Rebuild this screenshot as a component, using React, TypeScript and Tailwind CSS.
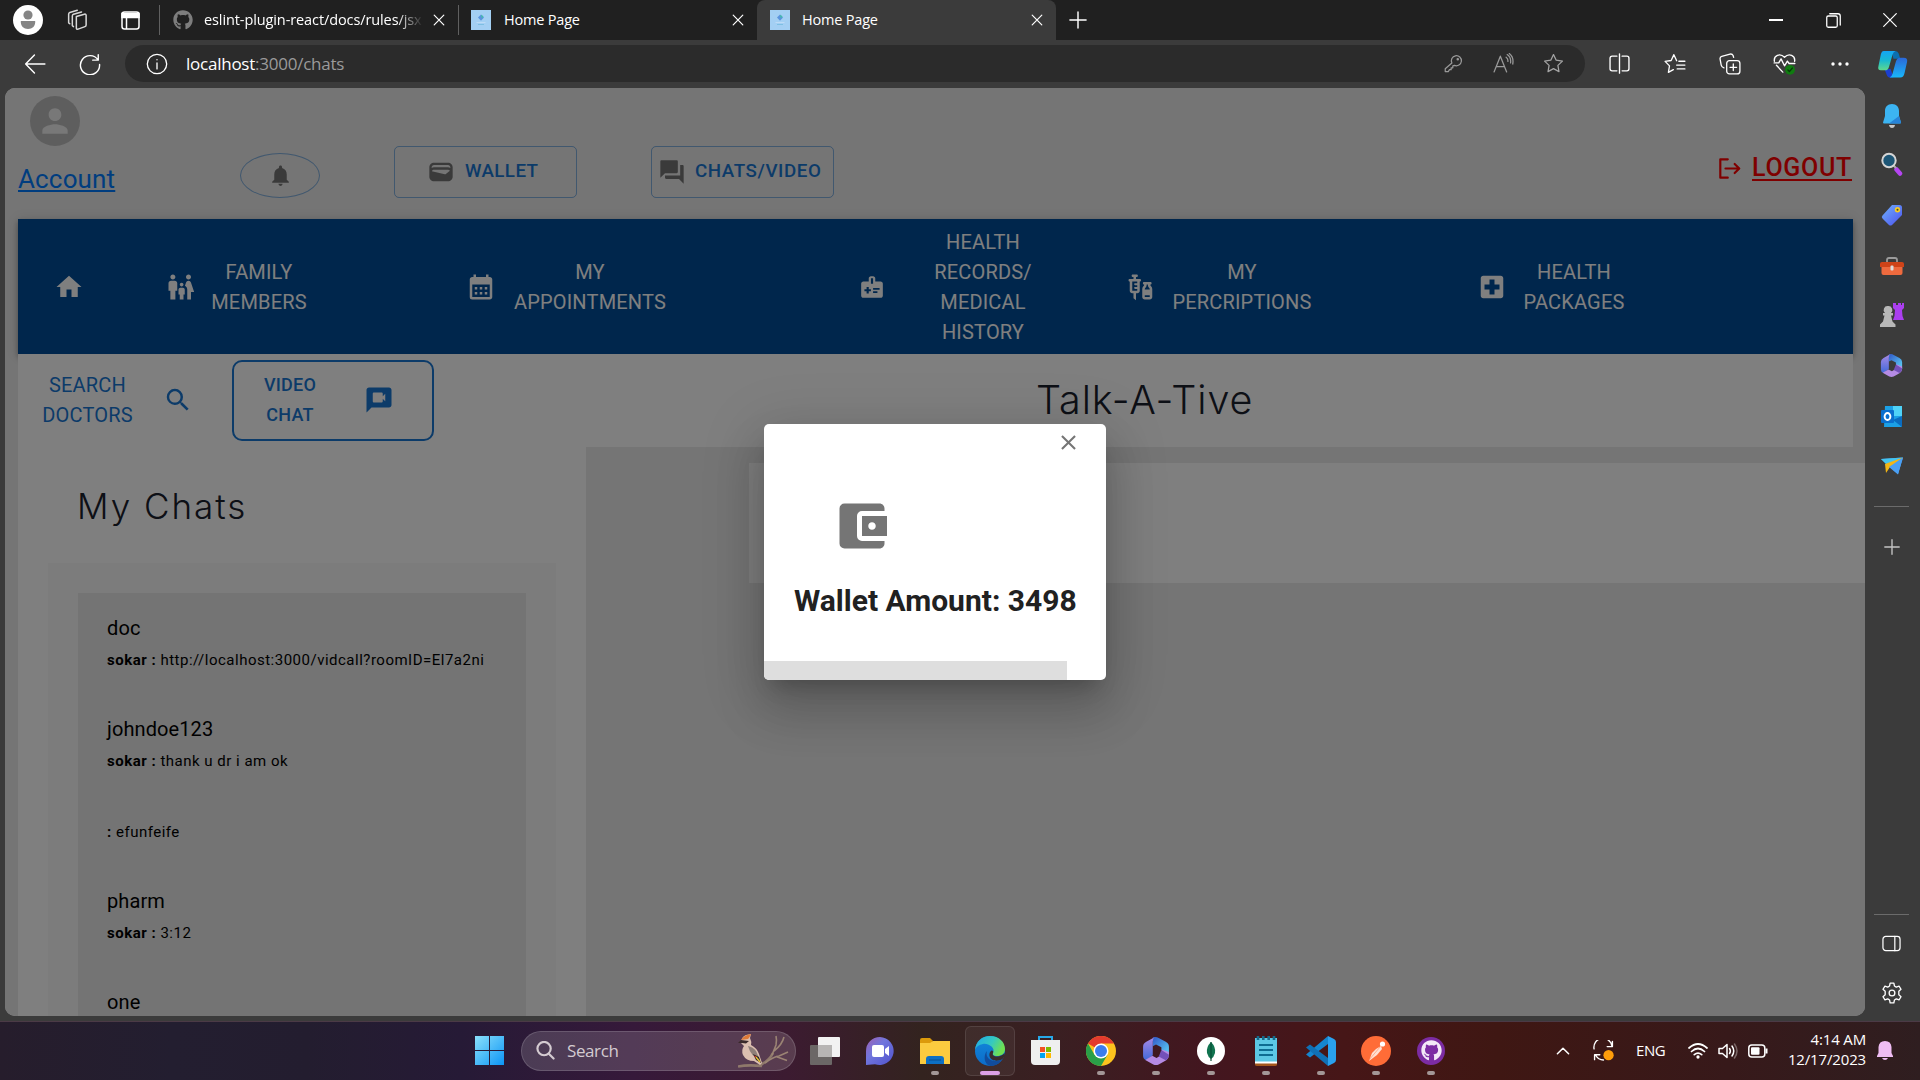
import React from 'react';
import {
  MdPerson, MdNotifications, MdWallet, MdQuestionAnswer, MdHome, MdFamilyRestroom, MdCalendarMonth,
  MdMedicalInformation, MdVaccines, MdLocalHospital, MdSearch, MdVideoChat, MdClose, MdAccountBalanceWallet,
} from 'react-icons/md';
import { FaGithub } from 'react-icons/fa';

type P = { children?: React.ReactNode; className?: string };

/* Thin-stroke 20-unit drawing used for the browser chrome */
const Line = ({ s = 20, w = 1.4, children, className = '' }: P & { s?: number; w?: number }) => (
  <svg width={s} height={s} viewBox="0 0 20 20" fill="none" stroke="currentColor" strokeWidth={w}
    strokeLinecap="round" strokeLinejoin="round" className={'shrink-0 ' + className}>{children}</svg>
);
const Cross = () => <Line s={12} w={2}><path d="M2 2l16 16M18 2L2 18" /></Line>;
const Star = <path d="M10 1.5l2.6 5.4 5.9.8-4.3 4.1 1 5.9L10 14.900l-5.200 2.800 1-5.900L1.500 7.700l5.900-.8z" />;

const Favicon = () => (
  <svg width="20" height="20" viewBox="0 0 20 20" className="shrink-0">
    <rect width="20" height="20" fill="#a3cff3" />
    <path d="M10 4.500l3 3-3 3.200-3-3.200z" fill="#5a94de" />
    <path d="M10 4.800l2.500 1.400-1.600 2.200z" fill="#41bfa6" />
    <path d="M5.500 12.500h9" stroke="#bfdcf5" strokeWidth=".9" />
    <path d="M7 14.500h6" stroke="#79bde0" strokeWidth=".9" />
  </svg>
);

const Slot = ({ children, className = '' }: P) => (
  <div className={'flex shrink-0 items-center justify-center ' + className}>{children}</div>
);

const TitleBar = () => (
  <div className="flex h-10 shrink-0 items-center bg-[#202020] text-[14.5px] tracking-[-0.2px] text-white">
    <Slot className="ml-[13px] h-[30px] w-[30px] rounded-full bg-white">
      <svg width="16" height="20" viewBox="0 0 16 20" fill="#858585"><circle cx="8" cy="5" r="4.600" /><path d="M.8 11h14.400c.5 5-3 8-7.200 8S.3 16 .8 11z" /></svg>
    </Slot>
    <Slot className="w-[69px] text-[#d8d8d8]">
      <Line s={23} w={1.300}>
        <path d="M9 6.500l7-2q1.500-.3 1.500 1v8.500q0 1-1 1.300l-6 2.200q-1.500.4-1.500-1z" />
        <path d="M5.500 14.500V6q0-1 1-1.400l7-2M2.300 12V4.500q0-1 1-1.400l6.500-2M5.500 14.500l1 .8M2.300 12l1 .8" />
      </Line>
    </Slot>
    <Slot className="w-[36px]">
      <svg width="19" height="19" viewBox="0 0 19 19" fill="none" stroke="white" strokeWidth="1.500"><rect x="1" y="1" width="17" height="17" rx="2.500" /><path d="M1 2.500h17v4H1z" fill="white" /><path d="M5.500 6v12" /></svg>
    </Slot>
    <div className="ml-[11px] h-[30px] w-px bg-[#606060]" />
    <FaGithub size={20} className="ml-[13px] text-[#7d7d7d]" />
    <div className="ml-[11px] w-[219px] overflow-hidden tracking-[-0.100px] whitespace-nowrap [mask-image:linear-gradient(to_right,black_88%,transparent)]">eslint-plugin-react/docs/rules/jsx</div>
    <Slot className="ml-[8px] w-4"><Cross /></Slot>
    <div className="ml-[11px] h-[30px] w-px bg-[#606060]" />
    <div className="ml-[12px] flex w-[286px] items-center">
      <Favicon /><div className="ml-[13px] flex-1">Home Page</div>
      <Slot className="mr-[11px] w-4"><Cross /></Slot>
    </div>
    <div className="relative flex h-10 w-[299px] items-center rounded-t-lg bg-[#3b3b3b]">
      <div className="ml-[13px]"><Favicon /></div><div className="ml-[12px] flex-1">Home Page</div>
      <Slot className="mr-[11px] w-4"><Cross /></Slot>
    </div>
    <Slot className="ml-[12px] w-5"><Line s={18} w={1.600}><path d="M10 1v18M1 10h18" /></Line></Slot>
    <div className="flex-1" />
    <div className="h-[1.500px] w-[14px] bg-white" />
    <Slot className="ml-[43px] w-[14px]"><Line s={15} w={1.700}><rect x="1" y="4" width="14" height="15" rx="2" /><path d="M5 1h11q3 0 3 3v12" /></Line></Slot>
    <Slot className="mr-[23px] ml-[43px] w-[14px]"><Line s={14} w={1.700}><path d="M1 1l18 18M19 1L1 19" /></Line></Slot>
  </div>
);

const Toolbar = () => (
  <div className="flex h-12 shrink-0 items-center bg-[#3b3b3b] pb-px text-white">
    <Slot className="ml-[24px] w-[22px]"><Line s={22} w={1.300}><path d="M19 10H1.500M9.500 1.800L1.500 10l8 8.200" /></Line></Slot>
    <Slot className="ml-[33px] w-[22px]"><Line s={22} w={1.300}><path d="M17.500 1.500v5h-5M17.300 6.300A8.700 8.700 0 1 0 18.700 10.500" /></Line></Slot>
    <div className="ml-[24px] flex h-[37px] w-[1460px] items-center rounded-full bg-[#2b2b2b]">
      <Slot className="ml-[20px] w-[23px]"><Line s={22} w={1.200}><circle cx="10" cy="10" r="8.800" /><path d="M10 9v5.500M10 6v.2" /></Line></Slot>
      <div className="ml-[18px] flex-1 text-[17px] tracking-[-0.240px]">localhost<span className="text-[#9a9a9a]">:3000/chats</span></div>
      <Slot className="w-[50px] text-[#9a9a9a]"><Line s={19} w={1.300}><path d="M8.300 9.500A5.300 5.300 0 1 1 11 12l-1.700.5v2H7.500v2H5.800L4.500 18.500H1.300v-3z" /><circle cx="14.500" cy="5.500" r=".7" /></Line></Slot>
      <Slot className="w-[50px] text-[#9a9a9a]"><Line s={21} w={1.200}><path d="M1 18L7 3l6 15M3 13h8M12.500 4q2 1.500 1.700 4M13.500 1.500q4 2.500 3.200 8M15.500.5q4.500 3.500 3.300 10" /></Line></Slot>
      <Slot className="mr-[7px] w-[50px] text-[#a5a5a5]"><Line s={21} w={1.200}>{Star}</Line></Slot>
    </div>
    <Slot className="ml-[6px] w-[56px]"><Line s={21} w={1.300}><path d="M7.500 3H3q-2 0-2 2v10q0 2 2 2h4.500M12.500 3H17q2 0 2 2v10q0 2-2 2h-4.500M10 .8v18.400" /></Line></Slot>
    <Slot className="w-[55px]"><Line s={22} w={1.200}><path d="M11.500 7L9 1.500 6.500 6.800l-5.500.8 4 4.100-1 5.900 4.500-2.500M13.500 7.500H19M11.500 11H19M12 14.500h7" /></Line></Slot>
    <Slot className="w-[55px]"><Line s={22} w={1.200}><rect x="7" y="7" width="12" height="12" rx="2.500" /><path d="M13 10v6M10 13h6M4.500 13.500Q2.500 13 2 11L1 5.500q-.3-2 1.500-2.500l7.500-2q2-.4 2.800 1.300l.5 1.700" /></Line></Slot>
    <Slot className="w-[55px]">
      <Line s={23} w={1.200}><path d="M1.200 8C.5 3 6 .5 10 4.500 14 .5 19.500 3 18.800 8M3 11.500l5.500 6M1 9.500h4l2-3.500 3 6 2.500-4 1.500 2h5" /><circle cx="14.800" cy="15.500" r="4.300" fill="#107c10" stroke="none" /><path d="M13 15.700l1.300 1.300 2.500-3" stroke="#063d06" /></Line>
    </Slot>
    <Slot className="w-[55px]"><svg width="18" height="4" fill="white"><circle cx="2" cy="2" r="1.700" /><circle cx="9" cy="2" r="1.700" /><circle cx="16" cy="2" r="1.700" /></svg></Slot>
    <Slot className="ml-[8px] w-[34px]">
      <svg width="31" height="28" viewBox="0 0 32 28">
        <defs>
          <linearGradient id="cp1" x1="0" y1="0" x2="0" y2="1"><stop offset="0" stopColor="#14a5f5" /><stop offset=".5" stopColor="#19b9d0" /><stop offset="1" stopColor="#5fd98c" /></linearGradient>
          <linearGradient id="cp2" x1="0" y1="0" x2="0" y2="1"><stop offset="0" stopColor="#2b67d8" /><stop offset="1" stopColor="#19b8fb" /></linearGradient>
        </defs>
        <path d="M15 .5h4q2.500 0 3.500 3l1.500 5h-7z" fill="#0b6fb0" />
        <path d="M8 20l6-1 3 9h-3q-3 0-4-3z" fill="#1b3fd0" />
        <path d="M7 .5h12q-2 .5-3 4l-3.500 12q-1 4-4 4H4Q.3 20.500 1.500 16L4 4Q4.800.5 7 .5z" fill="url(#cp1)" />
        <path d="M24 7.500h3.500Q32 7.500 31 12l-2.500 11q-1 5-4.500 5H13q2.200-.5 3-4l3.500-12.500q1-4 4.500-4z" fill="url(#cp2)" />
      </svg>
    </Slot>
  </div>
);

const Hexa = ({ s }: { s: number }) => (
  <svg width={s} height={s} viewBox="0 0 26 26">
    <defs>
      <linearGradient id="hx" x1="0" y1="0" x2="1" y2="1"><stop offset="0" stopColor="#3158c8" /><stop offset="1" stopColor="#5ed6f8" /></linearGradient>
      <linearGradient id="hy" x1="0" y1="0" x2="0" y2="1"><stop offset="0" stopColor="#a98ae6" /><stop offset="1" stopColor="#4169d8" /></linearGradient>
    </defs>
    <path d="M10 .5q3-1 5.500.5L22 4.500q3 1.500 3 4.500v8l-7-5V9.500L13 7l-3 1.500z" fill="url(#hx)" />
    <path d="M12 0L4 4.500Q1 6 1 9v8.500q0 3 3 4l6-4.500V4q0-3 2-4z" fill="url(#hy)" />
    <path d="M25 14v3q0 3-2.500 4.500l-7 4q-2.500 1-5 0L3 21.300 9.500 17.500l4 2 5-3v-5z" fill="#b58be4" />
    <path d="M18 12l7 4.500q0 3.500-3 5L15.500 18z" fill="#7350b8" />
  </svg>
);

const SideBar = () => (
  <div className="flex w-[55px] shrink-0 flex-col items-center bg-[#3b3b3b] pr-[2px] text-white">
    <Slot className="mt-[3px] h-[49px]">
      <svg width="18" height="24" viewBox="0 0 18 24"><path d="M9 0C4.500 0 2 3 2 7v5L0 18.500q0 1 1 1h16q1 0 1-1L16 12V7c0-4-2.500-7-7-7z" fill="#3cb4f2" /><path d="M16 12l2 6.500q0 1-1 1H6z" fill="#2783d8" /><path d="M6 21h6q-.5 3-3 3t-3-3z" fill="#c8c8c8" /></svg>
    </Slot>
    <Slot className="h-[48px]">
      <svg width="22" height="24" viewBox="0 0 22 24"><path d="M15.500 17.500l3.500 4" stroke="#b545f2" strokeWidth="4.500" strokeLinecap="round" /><path d="M12 13l3 3" stroke="#aaa" strokeWidth="2" /><circle cx="8" cy="8.500" r="6.700" fill="#1d5676" stroke="#d5d5d5" strokeWidth="2" /></svg>
    </Slot>
    <Slot className="h-[53px]">
      <svg width="22" height="22" viewBox="0 0 22 22"><defs><linearGradient id="tg" x1="0" y1="0" x2="1" y2="1"><stop offset="0" stopColor="#6fb2fb" /><stop offset="1" stopColor="#4c50ef" /></linearGradient></defs><path d="M11 1h7.500Q21 1 21 3.500V11L11 21q-1.500 1-3 0L1.500 14.500q-1.500-1.500 0-3z" fill="url(#tg)" /><circle cx="16.500" cy="5.700" r="2.700" fill="#f6ca27" /><circle cx="16.500" cy="5.700" r="1" fill="#4b4c1c" /></svg>
    </Slot>
    <Slot className="h-[49px]">
      <svg width="24" height="18" viewBox="0 0 24 18"><path d="M7 5V3q0-2 2-2h6q2 0 2 2v2" fill="none" stroke="#9b9b9b" strokeWidth="1.800" /><path d="M1.500 9h21v7q0 2-2 2h-17q-2 0-2-2z" fill="#ee6a3e" /><path d="M2 5h20q2 0 2 2v3H0V7q0-2 2-2z" fill="#cf4318" /><rect x="10.500" y="8.500" width="3" height="5" rx="1" fill="#ddd" /></svg>
    </Slot>
    <Slot className="h-[50px]">
      <svg width="24" height="24" viewBox="0 0 24 24"><path d="M13 0h3v2h2V0h3v2h1V0h2v5l-2 2 .5 6 1.500 4H13l1.500-4L15 7l-2-2z" fill="#ab3ff0" /><path d="M8 3a4 4 0 0 1 3 7h2v2.500h-2l1.500 6 3 3V24H0v-2.500l3-3 1.500-6H3V10h2a4 4 0 0 1 3-7z" fill="#b8b8b8" /></svg>
    </Slot>
    <Slot className="h-[51px]"><Hexa s={23} /></Slot>
    <Slot className="h-[51px]">
      <svg width="21" height="21" viewBox="0 0 21 21"><path d="M4 0h17v20q0 1-1 1H3z" fill="#1ba0e6" /><path d="M12 0h9v10h-9z" fill="#4fd3f8" /><path d="M12 14l9-4v11z" fill="#0a6cc0" /><rect y="4" width="13" height="13" rx="1" fill="#0a6fce" /><ellipse cx="6.500" cy="10.500" rx="2.900" ry="3.500" fill="none" stroke="white" strokeWidth="1.900" /></svg>
    </Slot>
    <Slot className="h-[47px]">
      <svg width="22" height="18" viewBox="0 0 22 18"><path d="M0 2L22 .5 17 17l-6-5z" fill="#4aa5f5" /><path d="M0 2L22 .5 5 7z" fill="#43c4f0" /><path d="M22 .5L4 7l1 9 4-6z" fill="#f4b614" /><path d="M22 .5L8 10l9 7.500z" fill="#4a9ff4" /></svg>
    </Slot>
    <div className="mt-[17px] h-px w-[35px] bg-[#6b6b6b]" />
    <Slot className="mt-[31px] h-[17px] text-[#c5c5c5]"><Line s={16} w={1.700}><path d="M10 1v18M1 10h18" /></Line></Slot>
    <div className="mt-auto h-px w-[35px] bg-[#6b6b6b]" />
    <Slot className="mt-[18px] h-[20px]"><Line s={19} w={1.300}><rect x="1" y="2.500" width="18" height="15" rx="3" /><path d="M13.500 2.500v15" /></Line></Slot>
    <Slot className="mt-[28px] mb-[16px] h-[24px]">
      <Line s={22} w={1.200}><circle cx="10" cy="10" r="2.600" /><path d="M8.300 1h3.400l.5 2.600 1.700 1 2.500-.9 1.800 2.900-2 1.800v3.200l2 1.800-1.800 2.900-2.500-.9-1.700 1-.5 2.600H8.300l-.5-2.600-1.700-1-2.500.9-1.800-2.900 2-1.800V8.400l-2-1.800 1.800-2.900 2.500.9 1.700-1z" /></Line>
    </Slot>
  </div>
);

const NavLabel = ({ children, className = '' }: P) => (
  <div className={'shrink-0 text-center text-[20px] leading-[30px] tracking-[0.180px] ' + className}>{children}</div>
);

const NavBar = () => (
  <div className="relative flex h-[135px] items-center bg-[#004d99] pt-px text-white shadow-[0_2px_5px_rgba(0,0,0,0.2),0_5px_6px_rgba(0,0,0,0.14),0_1px_12px_rgba(0,0,0,0.12)]">
    <MdHome size={30} className="ml-[36px] shrink-0" />
    <MdFamilyRestroom size={30} className="ml-[82px] shrink-0" />
    <NavLabel className="ml-[8px] w-[110px]">FAMILY<br />MEMBERS</NavLabel>
    <MdCalendarMonth size={30} className="ml-[152px] shrink-0" />
    <NavLabel className="ml-[14px] w-[160px]">MY<br />APPOINTMENTS</NavLabel>
    <MdMedicalInformation size={26} className="ml-[189px] shrink-0" />
    <NavLabel className="ml-[38px] w-[120px]">HEALTH<br />RECORDS/<br />MEDICAL<br />HISTORY</NavLabel>
    <MdVaccines size={30} className="ml-[83px] shrink-0" />
    <NavLabel className="ml-[11px] w-[150px]">MY<br />PERCRIPTIONS</NavLabel>
    <MdLocalHospital size={30} className="ml-[160px] shrink-0" />
    <NavLabel className="ml-[12px] w-[110px]">HEALTH<br />PACKAGES</NavLabel>
  </div>
);

const chats = [
  { name: 'doc', from: 'sokar :', text: 'http://localhost:3000/vidcall?roomID=El7a2ni' },
  { name: 'johndoe123', from: 'sokar :', text: 'thank u dr i am ok' },
  { name: '', from: ':', text: 'efunfeife' },
  { name: 'pharm', from: 'sokar :', text: '3:12' },
  { name: 'one', from: '', text: '' },
];

const Page = () => (
  <div className="relative ml-[5px] h-[928px] w-[1860px] shrink-0 overflow-hidden rounded-[10px] bg-[#eaeaea] font-['Roboto',sans-serif] text-[#000]">
    <div className="flex h-[131px] items-start">
      <div className="ml-[13px] w-[222px]">
        <Slot className="mt-[8px] ml-[12px] h-[50px] w-[50px] rounded-full bg-[#bdbdbd] text-[#f0f0f0]"><MdPerson size={38} /></Slot>
        <div className="mt-[16px] text-[26px] leading-[34px] tracking-[0.150px] text-[#007bff] underline">Account</div>
      </div>
      <Slot className="mt-[65px] h-[45px] w-[80px] rounded-[50%] border border-[#1976d2]/50 text-[#757575]"><MdNotifications size={25} /></Slot>
      <div className="mt-[58px] ml-[74px] flex h-[52px] w-[183px] items-center rounded-[5px] border border-[#1976d2]/50 text-[18.750px] font-medium text-[#1976d2]">
        <MdWallet size={28} className="ml-[32px] text-[#757575]" /><span className="mb-[2px] ml-[10px] tracking-[0.400px]">WALLET</span>
      </div>
      <div className="mt-[58px] ml-[74px] flex h-[52px] w-[183px] items-center rounded-[5px] border border-[#1976d2]/50 text-[18.750px] font-medium text-[#1976d2]">
        <MdQuestionAnswer size={28} className="ml-[6px] text-[#757575]" /><span className="mb-[2px] ml-[9px] tracking-[0.580px]">CHATS/VIDEO</span>
      </div>
      <div className="mt-[63px] mr-[13px] ml-auto flex items-center text-[#ff0000]">
        <Line s={23} w={1.900}><path d="M8.500 2H2v16h6.500M6.500 10H18M14.500 6l4 4-4 4" /></Line>
        <span className="ml-[11px] text-[25px] leading-[34px] font-medium tracking-[0.700px] underline underline-offset-[3px]">LOGOUT</span>
      </div>
    </div>
    <div className="ml-[13px] w-[1835px]">
      <NavBar />
      <div className="relative flex h-[93px] bg-white text-[#1976d2]">
        <NavLabel className="mt-[16px] ml-[15px] w-[109px]">SEARCH<br />DOCTORS</NavLabel>
        <MdSearch size={30} className="mt-[31px] ml-[21px] shrink-0" />
        <div className="mt-[6px] ml-[39px] flex h-[81px] w-[202px] shrink-0 items-center rounded-[10px] border-2 border-[#1976d2]">
          <div className="mb-px ml-[26px] w-[60px] text-center text-[18px] leading-[30px] font-medium tracking-[0.200px]">VIDEO<br />CHAT</div>
          <MdVideoChat size={30} className="mb-px ml-[44px]" />
        </div>
        <div className="mt-[20px] ml-[602px] font-['Inter',sans-serif] text-[39.500px] leading-[52px] font-light tracking-[0.900px] text-[#1a202c]">Talk-A-Tive</div>
      </div>
    </div>
    <div className="flex h-[569px]">
      <div className="ml-[13px] w-[568px] shrink-0 bg-white px-[30px]">
        <div className="ml-[29px] h-[116px] pt-[34px] font-['Inter',sans-serif] text-[35px] leading-[50px] font-light tracking-[2px] text-[#1a202c]">My Chats</div>
        <div className="h-[453px] bg-[#f8f8f8] px-[30px] pt-[30px]">
          <div className="h-[423px] bg-[#e8e8e8] pt-[20px] pl-[29px]">
            {chats.map((c, i) => (
              <div key={i} className="mb-[40px]">
                {c.name && <div className="text-[20px] leading-[30px] tracking-[0.100px]">{c.name}</div>}
                <div className="h-[31px] text-[15px] leading-[35px] tracking-[0.500px] whitespace-nowrap"><b>{c.from}</b> {c.text}</div>
              </div>
            ))}
          </div>
        </div>
      </div>
      <div className="flex-1 pt-[16px] pl-[163px]"><div className="h-[120px] bg-white" /></div>
    </div>
    <div className="absolute inset-0 bg-black/50" />
    <div className="absolute top-[336px] left-[759px] flex h-[256px] w-[342px] flex-col overflow-hidden rounded-[5px] bg-white text-[#757575] shadow-[0_14px_19px_-9px_rgba(0,0,0,0.2),0_30px_48px_4px_rgba(0,0,0,0.14),0_11px_58px_10px_rgba(0,0,0,0.12)]">
      <MdClose size={25} className="mt-[6px] ml-[292px] shrink-0" />
      <MdAccountBalanceWallet size={60} className="mt-[41px] ml-[68px] shrink-0" />
      <div className="mt-[25px] ml-[30px] text-[30px] leading-[40px] font-bold whitespace-nowrap text-[#212121]">Wallet Amount: 3498</div>
      <div className="mt-auto h-[19px] w-[303px] bg-[#dedede]" />
    </div>
  </div>
);

const TaskItem = ({ children, active, run = true }: P & { active?: boolean; run?: boolean }) => (
  <div className="flex h-[57px] w-[55.100px] shrink-0 items-center justify-center">
    <div className={'flex h-[50px] w-[50px] flex-col items-center rounded-md pt-[8px] ' + (active ? 'border border-white/10 bg-white/5' : 'border border-transparent')}>
      <Slot className="h-[32px]">{children}</Slot>
      {run && <div className={active ? 'mt-[4px] h-1 w-5 rounded-full bg-[#dc9fe6]' : 'mt-[4px] h-1 w-2 rounded-full bg-[#a39797]'} />}
    </div>
  </div>
);

const Bird = () => (
  <svg width="52" height="34" viewBox="0 0 52 34" fill="none">
    <path d="M0 32.500q10-2 24-.5M22 31q9-4 13-12" stroke="#8f796b" strokeWidth="2.600" />
    <path d="M34 21q2-5 4-10 1-5 0-9M36 17q8-6 10-14M27 29q8-6 14-7l9-4M38 22.500l11 4" stroke="#9b8474" strokeWidth="1.600" />
    <path d="M3 9Q3 3 8 1l5-1-1 4q2 4 1 7 6 3 8 9l3 9-2 2-6-4q-8 0-11-6-2-5 1-9z" fill="#dcbfb0" />
    <path d="M3 6Q6 1 13 0q-1 3-3 5z" fill="#dd7a38" />
    <path d="M0 9l3-3 8 1-3 2.500L4 9z" fill="#3a2a2a" />
    <path d="M10 12q5 1 8 5l3 7q-8-1-11-12z" fill="#8f7f79" />
    <path d="M15 20l6 3 2 6-5-3z" fill="#2b2626" /><path d="M18 23l4 5" stroke="#e7bf32" strokeWidth="1.400" /><path d="M16.500 22l1.500 1" stroke="#d8362b" strokeWidth="1.200" />
  </svg>
);

const TaskBar = () => (
  <div className="flex h-[59px] shrink-0 items-center border-t border-[#4b3a46] bg-[linear-gradient(to_right,#261d2c_0%,#231e30_9%,#231d2f_16%,#261a36_24%,#36193a_33%,#3c1b31_41%,#33231f_48%,#3a1f22_55%,#43161f_63%,#461617_70%,#3f1713_78%,#37191a_90%,#2f1e20_100%)] pb-px text-white">
    <div className="ml-[475px]">
      <svg width="29" height="29" viewBox="0 0 29 29"><defs><linearGradient id="wn" x1="0" y1="0" x2="1" y2="1"><stop offset="0" stopColor="#8be0fb" /><stop offset="1" stopColor="#0c95f5" /></linearGradient></defs><path d="M0 0h14v14H0zM15 0h14v14H15zM0 15h14v14H0zM15 15h14v14H15z" fill="url(#wn)" /></svg>
    </div>
    <div className="ml-[17px] flex h-[40px] w-[275px] items-center rounded-full border border-white/15 bg-white/15 text-[#d4cbd1]">
      <Line s={19} w={2.300} className="ml-[14px]"><circle cx="8.500" cy="8" r="7" /><path d="M13.500 13.500L18.500 18.500" /></Line>
      <div className="ml-[12px] flex-1 text-[17px] tracking-[-0.400px]">Search</div>
      <div className="mr-[5px]"><Bird /></div>
    </div>
    <div className="ml-[1.500px] flex">
      <TaskItem run={false}><svg width="30" height="28" viewBox="0 0 30 28"><rect y="8" width="22" height="20" rx="1" fill="#6b6766" /><rect x="8" width="22" height="20" rx="1" fill="#f2f2f2" /><path d="M8 8h14v12H8z" fill="#b7b5b4" /></svg></TaskItem>
      <TaskItem run={false}>
        <svg width="28" height="28" viewBox="0 0 28 28"><defs><linearGradient id="ct" x1="0" y1="0" x2="1" y2="1"><stop offset="0" stopColor="#a05fb0" /><stop offset=".4" stopColor="#7176dd" /><stop offset="1" stopColor="#5052cc" /></linearGradient></defs><path d="M14 0a14 14 0 1 1-5 27.200L0 28V14A14 14 0 0 1 14 0z" fill="url(#ct)" /><rect x="6" y="8" width="12" height="12" rx="2" fill="white" /><path d="M19 12l4-3v10l-4-3z" fill="white" /></svg>
      </TaskItem>
      <TaskItem><svg width="30" height="26" viewBox="0 0 30 26"><path d="M0 2q0-2 2-2h8l3 3-2 3H0z" fill="#dc9a0b" /><path d="M0 5h10l3-2h17v23H0z" fill="#fbcb3f" /><path d="M6 26v-5q0-3 3-3h12q3 0 3 3v5z" fill="#0d70c4" /><path d="M9 22h12" stroke="#094f91" /></svg></TaskItem>
      <TaskItem active>
        <svg width="30" height="30" viewBox="0 0 30 30">
          <defs><linearGradient id="e1" x1="0" y1="0" x2="1" y2=".4"><stop offset="0" stopColor="#1fa7e8" /><stop offset=".6" stopColor="#35c9c0" /><stop offset="1" stopColor="#6fe052" /></linearGradient><linearGradient id="e2" x1="0" y1="0" x2="0" y2="1"><stop offset="0" stopColor="#1289dc" /><stop offset="1" stopColor="#0c6bc8" /></linearGradient></defs>
          <circle cx="15" cy="15" r="15" fill="url(#e2)" />
          <path d="M0 14C1 5 7 0 15 0c9 0 15 6 15 13 0 5-4 7-8 7-3 0-5-1-4-3C21 12 13 7 8 8 4 8.500 1 11 0 14z" fill="url(#e1)" />
          <path d="M12 15c-2 6 3 10 8 10 4 0 6-1 7.500-2-3 4.500-7 7-12 7C9 29 8 19 12 15z" fill="#114c9c" />
          <path d="M18 17c-1 2 1 3.500 4 3.500 3 0 6-1.500 7.500-3.500L30 20l-2.500 3c-5 3-12 2-13-3-.5-3 1-5 2-5.500 2 0 2 1.500 1.500 2.500z" fill="#3a2c2b" />
        </svg>
      </TaskItem>
      <TaskItem run={false}><svg width="29" height="29" viewBox="0 0 29 29"><path d="M8 5V1h13v4" fill="none" stroke="#27a8e8" strokeWidth="2" /><path d="M0 4h29v21q0 4-4 4H4q-4 0-4-4z" fill="#efefef" /><path d="M9 11h5v5H9z" fill="#f25022" /><path d="M15 11h5v5h-5z" fill="#7fba00" /><path d="M9 17h5v5H9z" fill="#00a4ef" /><path d="M15 17h5v5h-5z" fill="#ffb900" /></svg></TaskItem>
      <TaskItem><svg width="30" height="30" viewBox="0 0 30 30"><circle cx="15" cy="15" r="15" fill="#fcc31e" /><path d="M15 15L2 7.500A15 15 0 0 1 28 7.500H15z" fill="#e33b2e" /><path d="M2 7.500A15 15 0 0 0 15 30l6.500-11.200L15 15 8.500 18.800z" fill="#2a9f48" /><circle cx="15" cy="15" r="7.500" fill="white" /><circle cx="15" cy="15" r="6" fill="#3b7ded" /></svg></TaskItem>
      <TaskItem><Hexa s={28} /></TaskItem>
      <TaskItem><svg width="28" height="28" viewBox="0 0 28 28"><circle cx="14" cy="14" r="14" fill="white" /><path d="M14 5q-5 5-4 11 1 4 4 6 3-2 4-6 1-6-4-11z" fill="#11734f" /><path d="M14 5v19" stroke="#0a4f37" strokeWidth="1.200" /></svg></TaskItem>
      <TaskItem><svg width="22" height="30" viewBox="0 0 22 30"><path d="M0 27h22v1.500q0 1.500-2 1.500H2q-2 0-2-1.500z" fill="#a3561c" /><path d="M0 2h22v24H0z" fill="#5cc8e4" /><path d="M0 25.500h22v2H0z" fill="white" /><path d="M3 0v4M8.300 0v4M13.700 0v4M19 0v4" stroke="#156b8b" strokeWidth="2.600" /><path d="M4 9h14M4 14h14M4 19h14" stroke="#0e6d92" strokeWidth="2" /></svg></TaskItem>
      <TaskItem><svg width="30" height="30" viewBox="0 0 30 30"><path d="M22 8L4 21.500 0 18.500 22 0z" fill="#1585cf" /><path d="M22 22L4 8.500 0 11.500 22 30z" fill="#1070b6" /><path d="M22 0l6 3q2 1 2 3v18q0 2-2 3l-6 3z" fill="#2aa1ee" /></svg></TaskItem>
      <TaskItem><svg width="30" height="30" viewBox="0 0 30 30"><circle cx="15" cy="15" r="15" fill="#ff6c37" /><circle cx="21.500" cy="8" r="2.600" fill="white" /><path d="M20 10l-5 3-4 4-3 8 8-6 5-6z" fill="#ffe0d3" /><path d="M19 11L8 24" stroke="#ff8a5e" strokeWidth=".6" /></svg></TaskItem>
      <TaskItem><div className="flex h-7 w-7 items-center justify-center rounded-full bg-[#7c2ca3]"><FaGithub size={21} color="#f3e8f7" /></div></TaskItem>
    </div>
    <div className="flex flex-1 items-center justify-end text-[15px] tracking-[-0.400px]">
      <Line s={14} w={2.200}><path d="M2 14l8-8 8 8" /></Line>
      <Slot className="ml-[23px] w-[20px]">
        <Line s={21} w={1.300}><path d="M1 8.500A8.500 8.500 0 0 1 18 5.500M18.500 1.300V6.300h-5M1.500 18.700V14h5M2.500 14.500a9 9 0 0 0 7.500 4.500" /><circle cx="14.800" cy="14.500" r="4.900" fill="#ff9d0a" stroke="none" /></Line>
      </Slot>
      <div className="ml-[23px] w-[28px]">ENG</div>
      <Slot className="ml-[24px] w-[20px]"><Line s={20} w={1.700}><path d="M1 7q9-8 18 0M3.500 10.500q6.500-6 13 0M6.300 13.700q3.700-3.200 7.400 0" /><circle cx="10" cy="16" r=".8" fill="white" /></Line></Slot>
      <Slot className="ml-[10px] w-[20px]"><Line s={20} w={1.500}><path d="M1 7.500h3.500L9 3.500v13l-4.500-4H1zM11.500 7.500q1.800 2.500 0 5M14 5q3.500 5 0 10" /><path d="M16.500 3q5 7 0 14" stroke="#7a6666" /></Line></Slot>
      <Slot className="ml-[10px] w-[20px]"><svg width="20" height="14" viewBox="0 0 20 14"><rect x=".8" y="1" width="16" height="12" rx="3" fill="none" stroke="white" strokeWidth="1.500" /><rect x="3" y="3.300" width="8.500" height="7.400" rx="1" fill="white" /><path d="M18.500 4.500v5" stroke="white" strokeWidth="2" /></svg></Slot>
      <div className="mb-[3px] ml-[16px] w-[82px] text-right leading-[20px] tracking-[-0.150px] whitespace-nowrap">4:14 AM<br />12/17/2023</div>
      <svg width="16" height="19" viewBox="0 0 16 19" fill="#efbdf3" className="mr-[27px] ml-[11px]"><path d="M8 0Q2 0 1.500 6v6L0 15v1h16v-1l-1.500-3V6Q14 0 8 0zM5 17h6q-1 2-3 2t-3-2z" /></svg>
    </div>
  </div>
);

export default function App() {
  return (
    <div className="flex h-[1080px] w-[1920px] flex-col overflow-hidden bg-[#3b3b3b] font-['Open_Sans','Noto_Sans',sans-serif]">
      <TitleBar />
      <Toolbar />
      <div className="flex h-[933px] shrink-0">
        <Page />
        <SideBar />
      </div>
      <TaskBar />
    </div>
  );
}
